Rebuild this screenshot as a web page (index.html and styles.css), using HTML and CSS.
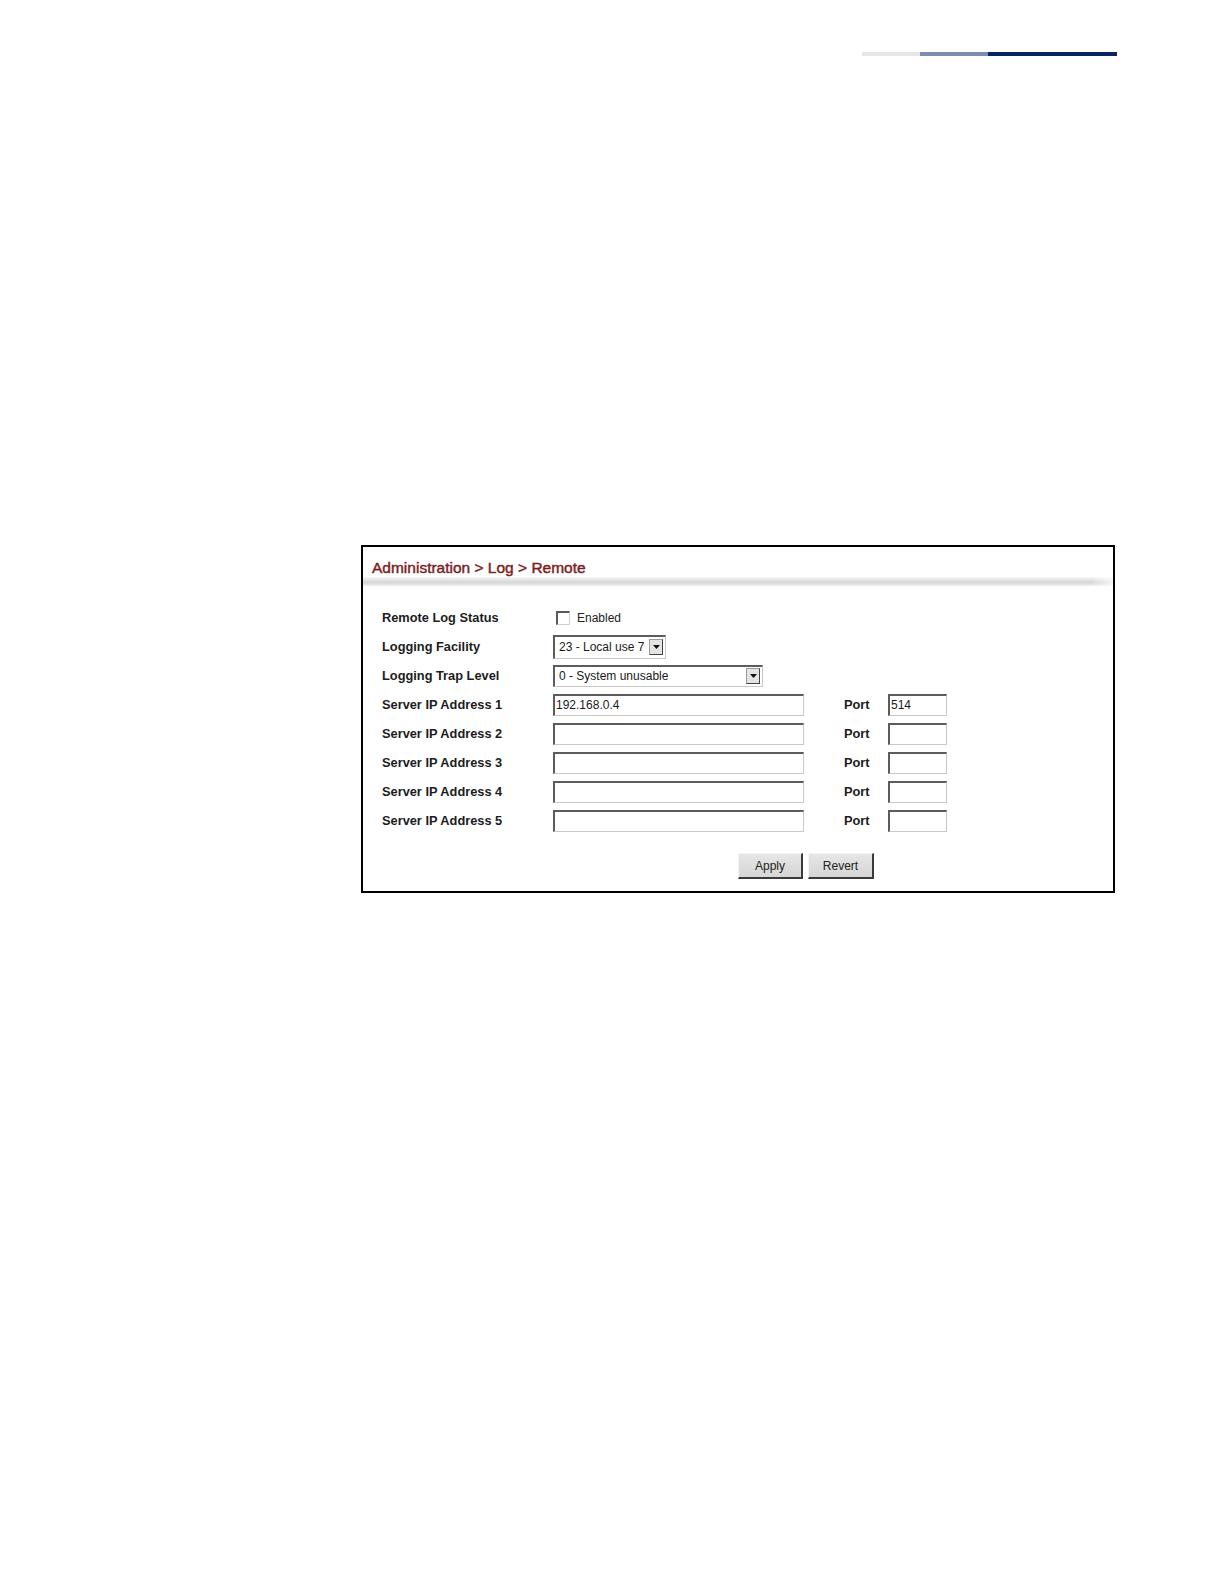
FILE: index.html
```html
<!DOCTYPE html>
<html>
<head>
<meta charset="utf-8">
<link rel="stylesheet" href="styles.css">
</head>
<body>
<div class="topbar">
  <span class="seg seg-light"></span><span class="seg seg-mid"></span><span class="seg seg-dark"></span>
</div>
<div class="frame">
  <div class="title">Administration &gt; Log &gt; Remote</div>
  <div class="title-rule"></div>
  <div class="form">
    <div class="row">
      <div class="label">Remote Log Status</div>
      <div class="ctrl"><span class="checkbox"></span><span class="cb-text">Enabled</span></div>
    </div>
    <div class="row">
      <div class="label">Logging Facility</div>
      <div class="ctrl"><div class="select select-short"><span class="sel-text">23 - Local use 7</span><span class="sel-btn"><svg width="7" height="4" viewBox="0 0 7 4"><path d="M0 0H7L3.5 4Z" fill="#111"/></svg></span></div></div>
    </div>
    <div class="row">
      <div class="label">Logging Trap Level</div>
      <div class="ctrl"><div class="select select-long"><span class="sel-text">0 - System unusable</span><span class="sel-btn"><svg width="7" height="4" viewBox="0 0 7 4"><path d="M0 0H7L3.5 4Z" fill="#111"/></svg></span></div></div>
    </div>
    <div class="row">
      <div class="label">Server IP Address 1</div>
      <div class="ctrl"><div class="input ip">192.168.0.4</div><div class="port-label">Port</div><div class="input port">514</div></div>
    </div>
    <div class="row">
      <div class="label">Server IP Address 2</div>
      <div class="ctrl"><div class="input ip"></div><div class="port-label">Port</div><div class="input port"></div></div>
    </div>
    <div class="row">
      <div class="label">Server IP Address 3</div>
      <div class="ctrl"><div class="input ip"></div><div class="port-label">Port</div><div class="input port"></div></div>
    </div>
    <div class="row">
      <div class="label">Server IP Address 4</div>
      <div class="ctrl"><div class="input ip"></div><div class="port-label">Port</div><div class="input port"></div></div>
    </div>
    <div class="row">
      <div class="label">Server IP Address 5</div>
      <div class="ctrl"><div class="input ip"></div><div class="port-label">Port</div><div class="input port"></div></div>
    </div>
    <div class="buttons">
      <span class="btn btn-apply">Apply</span><span class="btn btn-revert">Revert</span>
    </div>
  </div>
</div>
</body>
</html>
```
FILE: styles.css
```css
html, body {
  margin: 0;
  padding: 0;
  background: #ffffff;
}
body {
  font-family: "Liberation Sans", Arial, sans-serif;
  color: #1a1a1a;
  width: 1224px;
  height: 1584px;
}
.topbar {
  display: flex;
  justify-content: flex-end;
  padding-top: 52px;
  padding-right: 107px;
  height: 4px;
}
.seg { display: block; height: 4px; }
.seg-light { width: 58px; background: #e6e6ea; }
.seg-mid { width: 68px; background: #7e8daf; }
.seg-dark { width: 129px; background: #0a2463; }

.frame {
  box-sizing: border-box;
  margin-top: 489px;
  margin-left: 361px;
  width: 754px;
  height: 348px;
  border: 2px solid #000;
  background: #fff;
}
.title {
  padding: 11px 0 0 9px;
  height: 19px;
  font-size: 15.5px;
  line-height: 19px;
  color: #7a1e1e;
  -webkit-text-stroke: 0.45px #7a1e1e;
}
.title-rule {
  height: 9px;
  background: linear-gradient(to bottom, #f6f6f6 0%, #dedede 45%, #d6d6d6 60%, #f0f0f0 100%);
  -webkit-mask-image: linear-gradient(to right, #000 97%, rgba(0,0,0,0.3) 100%);
}
.form {
  padding: 17px 0 0 19px;
}
.row {
  display: flex;
  align-items: center;
  height: 29px;
}
.label {
  width: 171px;
  font-size: 12.8px;
  font-weight: bold;
  color: #1c1c1c;
}
.ctrl {
  display: flex;
  align-items: center;
}
.checkbox {
  box-sizing: border-box;
  display: block;
  width: 14px;
  height: 14px;
  margin-left: 3px;
  border-top: 2px solid #5a5a5a;
  border-left: 2px solid #5a5a5a;
  border-right: 1px solid #d0d0d0;
  border-bottom: 1px solid #d0d0d0;
  background: #fff;
}
.cb-text {
  margin-left: 7px;
  font-size: 12px;
  color: #222;
}
.select, .input {
  box-sizing: border-box;
  height: 22px;
  border-top: 2px solid #5c5c5c;
  border-left: 2px solid #5c5c5c;
  border-right: 1px solid #c8c8c8;
  border-bottom: 1px solid #c8c8c8;
  background: #fff;
  font-size: 12px;
  color: #1a1a1a;
  display: flex;
  align-items: center;
}
.select { justify-content: space-between; }
.select-short { width: 113px; height: 24px; }
.select-long { width: 210px; }
.sel-text { padding-left: 4px; }
.sel-btn {
  box-sizing: border-box;
  width: 14px;
  height: 16px;
  margin-right: 2px;
  border: 1px solid #9a9a9a;
  border-right-color: #444;
  border-bottom-color: #444;
  background: #e4e4e4;
  display: flex;
  align-items: center;
  justify-content: center;
}
.input { padding-left: 1px; }
.ip { width: 251px; }
.port-label {
  margin-left: 40px;
  width: 44px;
  font-size: 12.8px;
  font-weight: bold;
  color: #1c1c1c;
}
.port { width: 59px; }
.buttons {
  display: flex;
  gap: 5px;
  padding-left: 356px;
  margin-top: 18px;
}
.btn {
  box-sizing: border-box;
  height: 26px;
  display: flex;
  align-items: center;
  justify-content: center;
  font-size: 12px;
  color: #222;
  background: linear-gradient(to bottom, #e6e6e6, #d6d6d6);
  border-top: 1px solid #f4f4f4;
  border-left: 1px solid #f4f4f4;
  border-right: 2px solid #3a3a3a;
  border-bottom: 2px solid #3a3a3a;
}
.btn-apply { width: 65px; }
.btn-revert { width: 66px; }
```
